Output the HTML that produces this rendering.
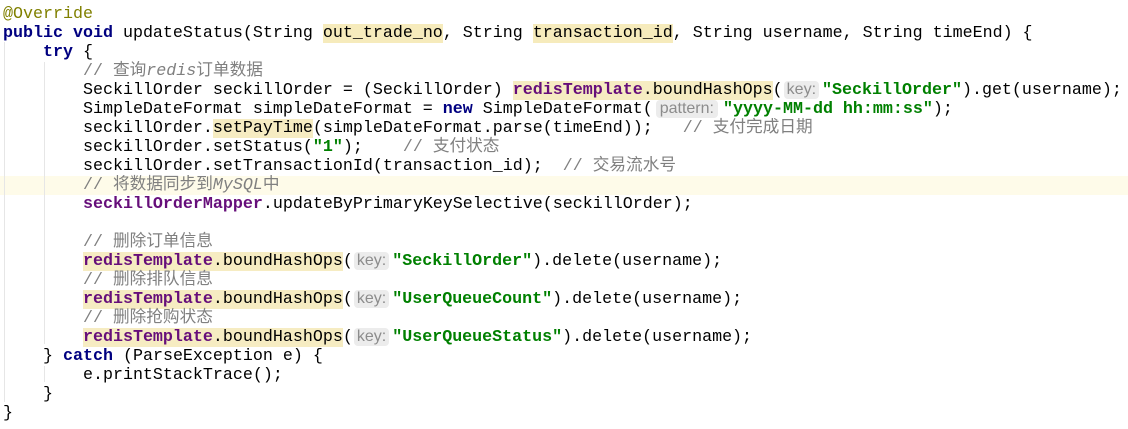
<!DOCTYPE html>
<html><head><meta charset="utf-8"><style>
body{margin:0;background:#fff;width:1128px;height:429px;overflow:hidden;position:relative}
.l{position:absolute;left:0;height:19px;line-height:19px;white-space:pre;font-family:"Liberation Mono","Noto Sans CJK SC",monospace;font-size:16.67px;color:#000}
.k{color:#000080;font-weight:bold}
.f{color:#660e7a;font-weight:bold}
.s{color:#008000;font-weight:bold}
.c{color:#808080}
.c i{font-style:italic}
.a{color:#808000}
.h{background:#f6ebbc}
.h2{background:#f6ecc2}
.p{display:inline-block;font-family:"Liberation Sans",sans-serif;font-size:16px;color:#8c8c8c;background:#ececec;border-radius:4px;padding:0 4px;line-height:18px;margin:0 5px 0 3px}
.p.q{padding:0 3px;margin:0 3px 0 1px}
.g{position:absolute;width:1px;background:#e6e6e6}
.cur{position:absolute;left:0;top:176px;width:1128px;height:19px;background:#fefbe9}
</style></head><body>
<div class="cur"></div>
<div class="g" style="left:4px;top:42px;height:360px"></div>
<div class="g" style="left:44px;top:62px;height:282px"></div>
<div class="g" style="left:44px;top:366px;height:16px"></div>
<div class="l" style="top:5px;left:3px"><span class="a">@Override</span></div>
<div class="l" style="top:24px;left:3px"><span class="k">public void</span> updateStatus(String <span class="h">out_trade_no</span>, String <span class="h">transaction_id</span>, String username, String timeEnd) {</div>
<div class="l" style="top:43px;left:3px">    <span class="k">try</span> {</div>
<div class="l" style="top:62px;left:3px">        <span class="c">// 查询<i>redis</i>订单数据</span></div>
<div class="l" style="top:81px;left:3px">        SeckillOrder seckillOrder = (SeckillOrder) <span class="h2"><span class="f">redisTemplate</span>.boundHashOps</span>(<span class="p q">key:</span><span class="s">"SeckillOrder"</span>).get(username);</div>
<div class="l" style="top:100px;left:3px">        SimpleDateFormat simpleDateFormat = <span class="k">new</span> SimpleDateFormat(<span class="p">pattern:</span><span class="s">"yyyy-MM-dd hh:mm:ss"</span>);</div>
<div class="l" style="top:119px;left:3px">        seckillOrder.<span class="h2">setPayTime</span>(simpleDateFormat.parse(timeEnd));   <span class="c">// 支付完成日期</span></div>
<div class="l" style="top:138px;left:3px">        seckillOrder.setStatus(<span class="s">"1"</span>);    <span class="c">// 支付状态</span></div>
<div class="l" style="top:157px;left:3px">        seckillOrder.setTransactionId(transaction_id);  <span class="c">// 交易流水号</span></div>
<div class="l" style="top:176px;left:3px">        <span class="c">// 将数据同步到<i>MySQL</i>中</span></div>
<div class="l" style="top:195px;left:3px">        <span class="f">seckillOrderMapper</span>.updateByPrimaryKeySelective(seckillOrder);</div>
<div class="l" style="top:233px;left:3px">        <span class="c">// 删除订单信息</span></div>
<div class="l" style="top:252px;left:3px">        <span class="h2"><span class="f">redisTemplate</span>.boundHashOps</span>(<span class="p q">key:</span><span class="s">"SeckillOrder"</span>).delete(username);</div>
<div class="l" style="top:271px;left:3px">        <span class="c">// 删除排队信息</span></div>
<div class="l" style="top:290px;left:3px">        <span class="h2"><span class="f">redisTemplate</span>.boundHashOps</span>(<span class="p q">key:</span><span class="s">"UserQueueCount"</span>).delete(username);</div>
<div class="l" style="top:309px;left:3px">        <span class="c">// 删除抢购状态</span></div>
<div class="l" style="top:328px;left:3px">        <span class="h2"><span class="f">redisTemplate</span>.boundHashOps</span>(<span class="p q">key:</span><span class="s">"UserQueueStatus"</span>).delete(username);</div>
<div class="l" style="top:347px;left:3px">    } <span class="k">catch</span> (ParseException e) {</div>
<div class="l" style="top:366px;left:3px">        e.printStackTrace();</div>
<div class="l" style="top:385px;left:3px">    }</div>
<div class="l" style="top:404px;left:3px">}</div>
</body></html>
